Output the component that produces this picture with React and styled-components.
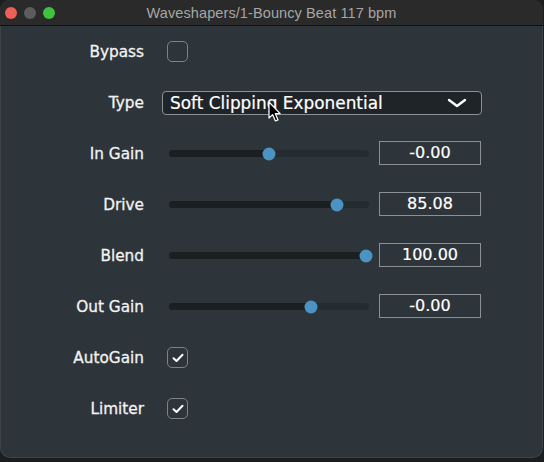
import React from "react";
import styled, { createGlobalStyle } from "styled-components";

const GlobalStyle = createGlobalStyle`
  html, body {
    margin: 0;
    padding: 0;
    background: #1c1d1e;
  }
  body {
    font-family: "DejaVu Sans", Verdana, sans-serif;
  }
`;

// 파라미터 목록
const sliders = [
  { label: "In Gain", pos: 0.5, value: "-0.00" },
  { label: "Drive", pos: 0.8508, value: "85.08" },
  { label: "Blend", pos: 1, value: "100.00" },
  { label: "Out Gain", pos: 0.716, value: "-0.00" },
];

const CheckIcon = () => (
  <svg width="12" height="10" viewBox="0 0 12 10">
    <polyline
      points="1.5,5.2 4.5,8 10.5,1.8"
      fill="none"
      stroke="#ffffff"
      strokeWidth="2"
      strokeLinecap="round"
      strokeLinejoin="round"
    />
  </svg>
);

const Chevron = () => (
  <svg width="20" height="10" viewBox="0 0 20 10">
    <polyline
      points="2,2 10,8 18,2"
      fill="none"
      stroke="#ffffff"
      strokeWidth="2.4"
      strokeLinecap="round"
      strokeLinejoin="round"
    />
  </svg>
);

const Pointer = () => (
  <Cursor width="14" height="22" viewBox="0 0 14 22">
    <path
      d="M1 1 L1 17 L4.6 13.6 L7.4 20 L10 18.9 L7.3 12.6 L12.2 12.6 Z"
      fill="#000000"
      stroke="#ffffff"
      strokeWidth="1.2"
      strokeLinejoin="round"
    />
  </Cursor>
);

const App = () => {
  return (
    <>
      <GlobalStyle />
      <Window>
        <TitleBar>
          <Lights>
            <Light color="#ee5f57" />
            <Light color="#5b5c5e" />
            <Light color="#3fc240" />
          </Lights>
          <Title>Waveshapers/1-Bouncy Beat 117 bpm</Title>
        </TitleBar>
        <Body>
          <Row>
            <Label>Bypass</Label>
            <Check />
          </Row>
          <Row>
            <Label>Type</Label>
            <Combo>
              <ComboText>Soft Clipping Exponential</ComboText>
              <Chevron />
              <Pointer />
            </Combo>
          </Row>
          {sliders.map((s) => (
            <Row key={s.label}>
              <Label>{s.label}</Label>
              <SliderWrap>
                <Slider>
                  <Track>
                    <Fill style={{ width: `calc(3px + ${s.pos} * 194px)` }} />
                    <Thumb style={{ left: `calc(3px + ${s.pos} * 194px)` }} />
                  </Track>
                </Slider>
                <ValueBox>{s.value}</ValueBox>
              </SliderWrap>
            </Row>
          ))}
          <Row>
            <Label>AutoGain</Label>
            <Check>
              <CheckIcon />
            </Check>
          </Row>
          <Row>
            <Label>Limiter</Label>
            <Check>
              <CheckIcon />
            </Check>
          </Row>
        </Body>
      </Window>
    </>
  );
};

const Window = styled.div`
  width: 543px;
  height: 458px;
  display: flex;
  flex-direction: column;
  background: #2e353a;
  border-radius: 10px;
  overflow: hidden;
  box-shadow: inset 0 0 0 1px rgba(255, 255, 255, 0.08);
`;

const TitleBar = styled.div`
  position: relative;
  height: 25px;
  flex-shrink: 0;
  display: flex;
  align-items: center;
  justify-content: center;
  background: #2a2a2a;
  border-bottom: 1px solid #0f0f0f;
`;

const Lights = styled.div`
  position: absolute;
  left: 5px;
  top: 7px;
  display: flex;
  gap: 7px;
`;

const Light = styled.span`
  width: 12px;
  height: 12px;
  border-radius: 50%;
  background: ${(p) => p.color};
`;

const Title = styled.span`
  font-family: "Liberation Sans", Arial, sans-serif;
  font-size: 14.5px;
  color: #a6a6a6;
  letter-spacing: 0.1px;
`;

const Body = styled.div`
  display: flex;
  flex-direction: column;
`;

const Row = styled.div`
  height: 51px;
  display: grid;
  grid-template-columns: 144px 1fr;
  column-gap: 18px;
  align-items: center;
`;

const Label = styled.span`
  text-align: right;
  font-size: 15.3px;
  color: #f2f3f4;
  -webkit-text-stroke: 0.3px #f2f3f4;
`;

const Check = styled.div`
  width: 19px;
  height: 19px;
  margin-left: 5px;
  border: 1.5px solid #7e8388;
  border-radius: 5px;
  display: flex;
  align-items: center;
  justify-content: center;
`;

const Combo = styled.div`
  position: relative;
  height: 22px;
  width: 297px;
  display: flex;
  align-items: center;
  justify-content: space-between;
  padding: 0 14px 0 7px;
  background: #1f2428;
  border: 1px solid #8b9095;
  border-radius: 4px;
`;

const ComboText = styled.span`
  font-size: 16.9px;
  color: #ffffff;
  white-space: nowrap;
  -webkit-text-stroke: 0.2px #ffffff;
`;

const Cursor = styled.svg`
  position: absolute;
  left: 105px;
  top: 9px;
`;

const SliderWrap = styled.div`
  display: flex;
  align-items: center;
  gap: 10px;
`;

const Slider = styled.div`
  width: 207px;
  padding: 0 0 0 7px;
  box-sizing: border-box;
  display: flex;
  align-items: center;
`;

const Track = styled.div`
  position: relative;
  width: 200px;
  height: 7px;
  border-radius: 4px;
  background: #252c31;
`;

const Fill = styled.div`
  height: 100%;
  border-radius: 4px;
  background: #1a1f22;
`;

const Thumb = styled.div`
  position: absolute;
  top: 50%;
  width: 13px;
  height: 13px;
  transform: translate(-50%, -50%);
  border-radius: 50%;
  background: #4a93c2;
`;

const ValueBox = styled.div`
  width: 100px;
  height: 22px;
  margin-top: -2px;
  border: 1px solid #8a9094;
  display: flex;
  align-items: center;
  justify-content: center;
  font-size: 16px;
  color: #ffffff;
  -webkit-text-stroke: 0.2px #ffffff;
`;

export default App;
